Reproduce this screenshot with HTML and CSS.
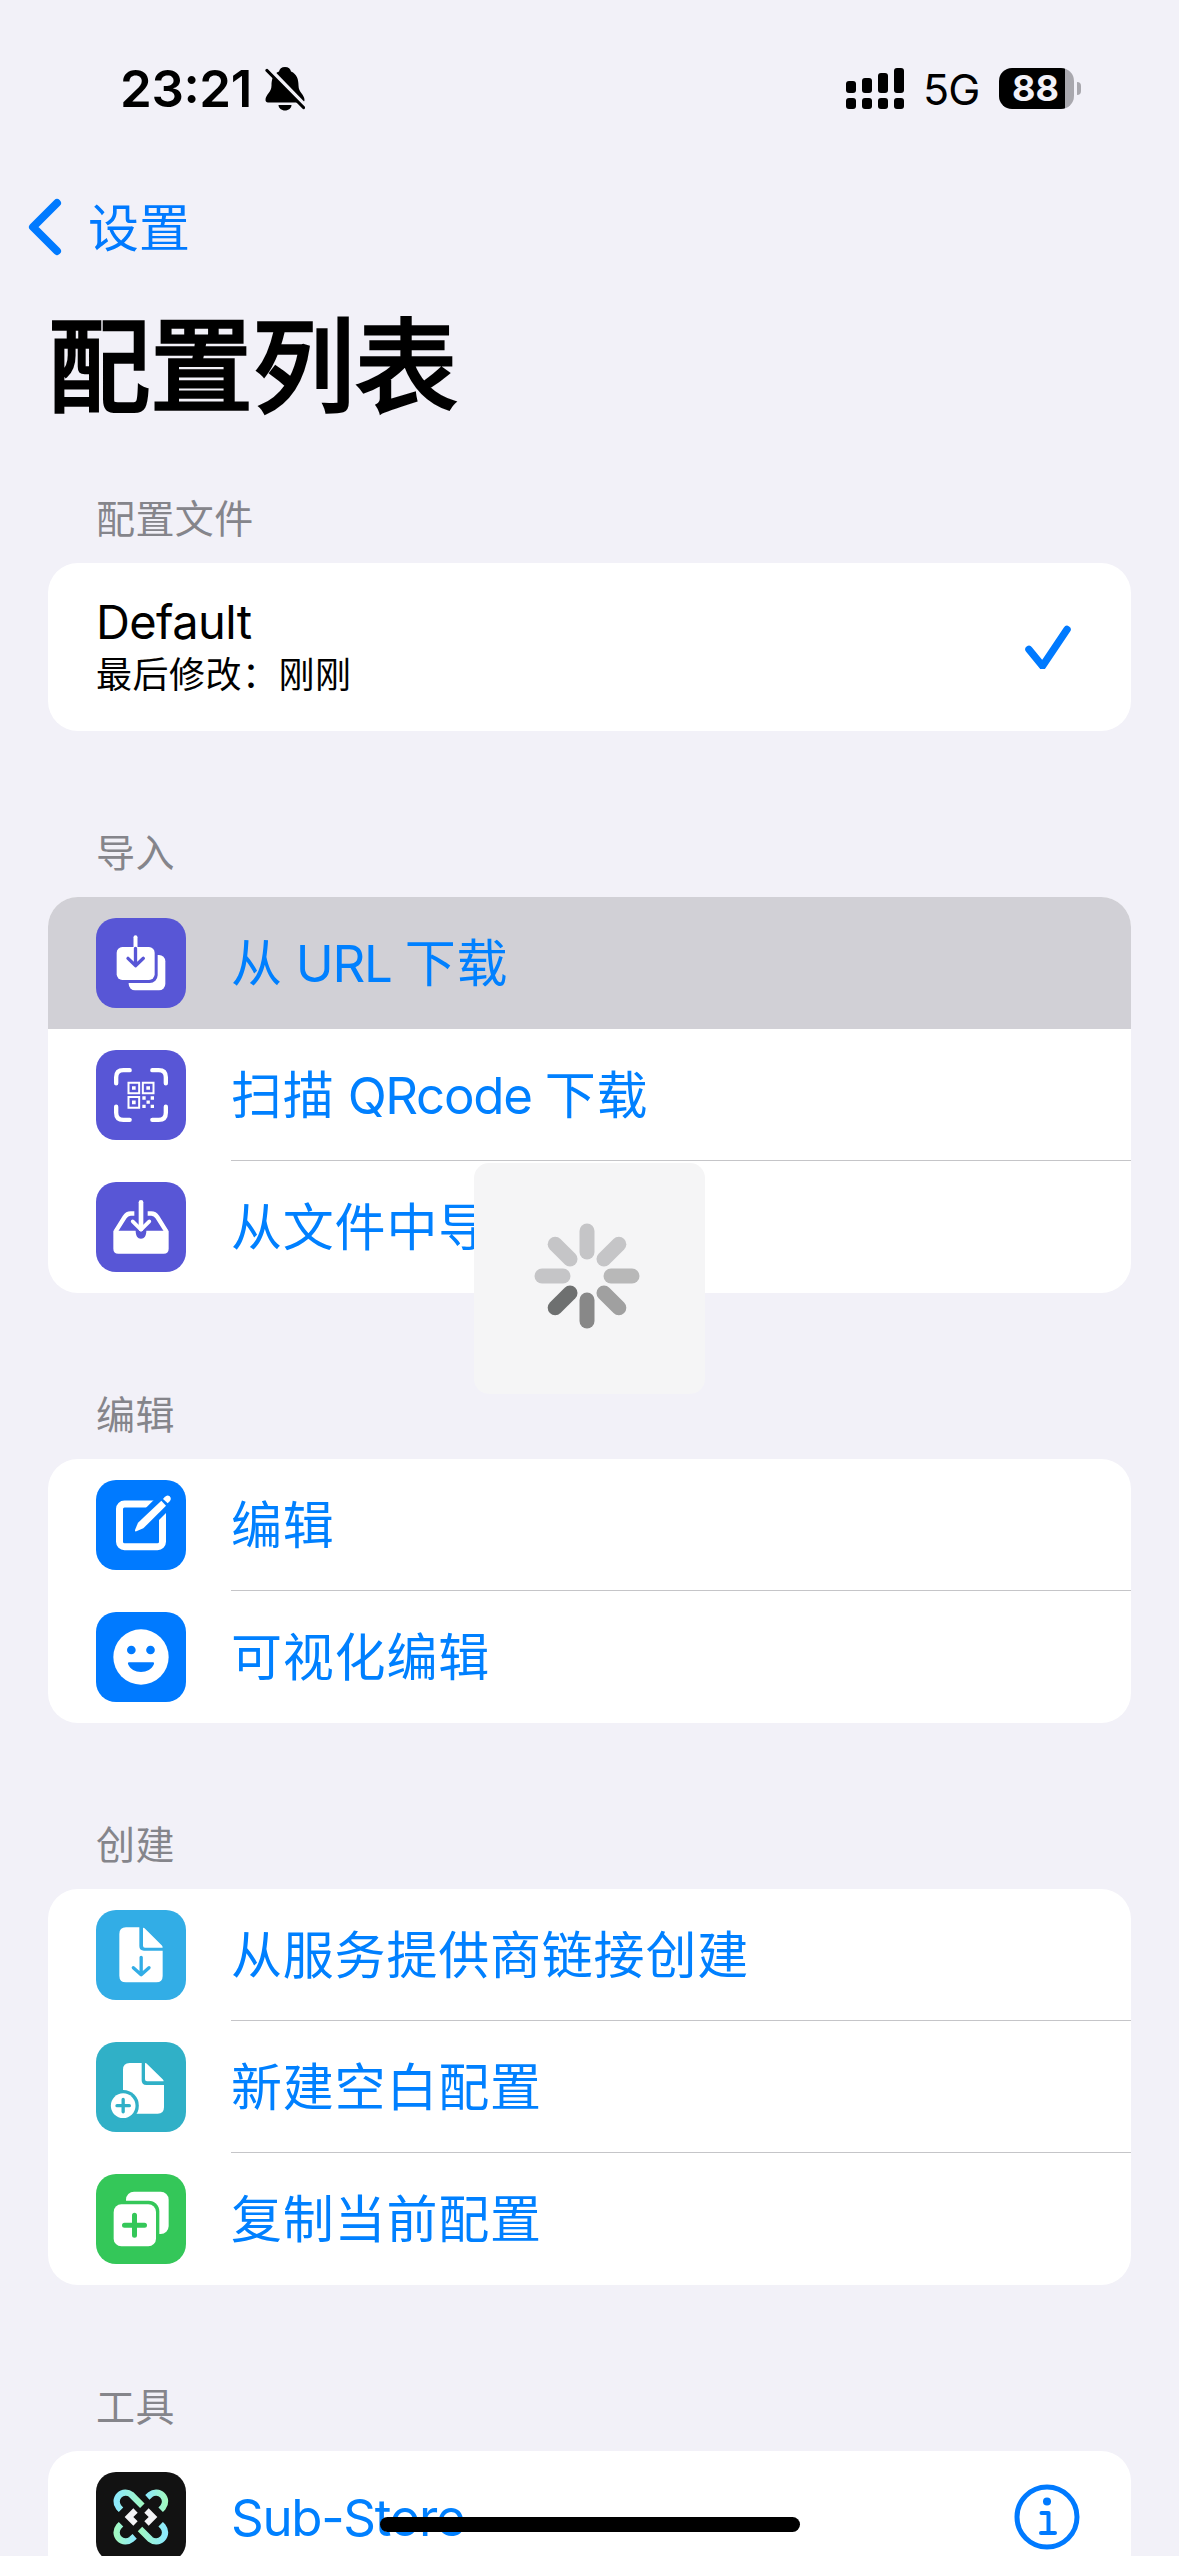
FILE: index.html
```html
<!DOCTYPE html>
<html lang="zh-CN">
<head>
  <meta charset="UTF-8">
  <meta name="viewport" content="width=device-width, initial-scale=1.0">
  <title>配置列表</title>
  <link rel="stylesheet" href="styles.css">
</head>
<body>
  <header class="status-bar">
    <div class="status-left">
      <span class="time">23<span class="colon">:</span>21</span>
      <svg class="bell" viewBox="0 0 40 44">
        <path d="M20 0c3.500 0 5.500 2 6 4.500 6 2.500 7.500 8 7.500 14 0 7 6 9 6 14.500 0 1.500-1 2.500-2.500 2.500H3C1.500 35.500.500 34.500.500 33c0-5.500 6-7.500 6-14.500 0-6 1.500-11.500 7.500-14C14.500 2 16.500 0 20 0z"/>
        <path d="M13.500 38h13c0 3-3 5.500-6.500 5.500s-6.500-2.500-6.500-5.500z"/>
        <path class="bell-gap" d="M3 1L40 39"/>
        <path class="bell-slash" d="M2 3.500L38.500 40.500"/>
      </svg>
    </div>
    <div class="status-right">
      <svg class="signal" viewBox="0 0 58 41">
        <rect x="0" y="13" width="10" height="12" rx="3"/>
        <rect x="16" y="10" width="10" height="15" rx="3"/>
        <rect x="32" y="5" width="10" height="20" rx="3"/>
        <rect x="48" y="0" width="10" height="25" rx="3"/>
        <rect x="0" y="30" width="10" height="11" rx="3"/>
        <rect x="16" y="30" width="10" height="11" rx="3"/>
        <rect x="32" y="30" width="10" height="11" rx="3"/>
        <rect x="48" y="30" width="10" height="11" rx="3"/>
      </svg>
      <span class="network">5G</span>
      <div class="battery"><span class="battery-level">88</span></div>
      <span class="battery-cap"></span>
    </div>
  </header>

  <nav class="nav">
    <svg class="back" viewBox="0 0 34 58"><path d="M29 5L5 29l24 24"/></svg>
    <span class="nav-title">设置</span>
  </nav>

  <h1>配置列表</h1>

  <main>
    <section>
      <h2>配置文件</h2>
      <div class="card">
        <div class="profile">
          <div>
            <p class="profile-name">Default</p>
            <p class="profile-date">最后修改：刚刚</p>
          </div>
          <svg class="check" viewBox="0 0 46 44"><path d="M4 24.500L17.500 41 42 4.500"/></svg>
        </div>
      </div>
    </section>

    <section>
      <h2>导入</h2>
      <div class="card">
        <div class="row pressed">
          <svg class="icon indigo" viewBox="0 0 270 270">
            <rect x="98" y="111" width="110" height="106" rx="19"/>
            <rect class="bg" x="53" y="78" width="132" height="117" rx="24"/>
            <rect x="62" y="87" width="114" height="99" rx="17"/>
            <path class="line" stroke-width="12" d="M118.500 58v34"/>
            <path class="line-bg" stroke-width="10" d="M118.500 91v50M96 121l22.500 22L142 121"/>
          </svg>
          <span class="label">从<span class="latin"> URL </span>下载</span>
        </div>
        <div class="row">
          <svg class="icon indigo" viewBox="0 0 270 270">
            <path class="line" stroke-width="13" d="M60.500 100V82q0-21.500 21.500-21.500h19M169 60.500h19q21.500 0 21.500 21.500v18M209.500 170v18q0 21.500-21.500 21.500h-19M101 209.500H82q-21.500 0-21.500-21.500v-18"/>
            <path class="thin" d="M97.500 98h32v32h-32zM140.500 98h32v32h-32zM97.500 141h32v32h-32z"/>
            <path d="M108 108.500h11v11h-11zM151 108.500h11v11h-11zM108 151.500h11v11h-11zM139 139h10v10h-10zM164 139h10v10h-10zM151.500 151.500h10v10h-10zM139 164h10v10h-10zM164 164h10v10h-10z"/>
          </svg>
          <span class="label">扫描<span class="latin"> QRcode </span>下载</span>
        </div>
        <div class="row">
          <svg class="icon indigo" viewBox="0 0 270 270">
            <path d="M52 146h67c0 15 6 24 16 24s16-9 16-24h67v54q0 15-15 15H67q-15 0-15-15z"/>
            <path class="line butt" stroke-width="13" d="M58.500 149L86 105q7-10.500 18-10.500h11M211.500 149L184 105q-7-10.500-18-10.500h-11"/>
            <path class="line" stroke-width="14" d="M135 61v80"/>
            <path class="line" stroke-width="11" d="M110 118l25 25 25-25"/>
          </svg>
          <span class="label">从文件中导入</span>
        </div>
      </div>
    </section>

    <section>
      <h2>编辑</h2>
      <div class="card">
        <div class="row">
          <svg class="icon blue" viewBox="0 0 270 270">
            <rect class="line" stroke-width="21" x="70.500" y="72" width="129" height="128.500" rx="15"/>
            <path class="line-bg butt" stroke-width="54" d="M142 129l90-90"/>
            <path d="M117 150l9-22 70-66 14 15-68 68-21 9q-5 1-4-4z"/>
            <path d="M201 57l5-6q8-8 15-2 7 8 0 15l-6 6z"/>
          </svg>
          <span class="label">编辑</span>
        </div>
        <div class="row">
          <svg class="icon blue" viewBox="0 0 270 270">
            <circle cx="135" cy="135" r="83"/>
            <circle class="bg" cx="106" cy="114" r="13"/>
            <circle class="bg" cx="163.500" cy="114" r="13"/>
            <path class="bg" d="M99 151h72q5 0 3 5c-6 16-22 24-39 24s-33-8-39-24q-2-5 3-5z"/>
          </svg>
          <span class="label">可视化编辑</span>
        </div>
      </div>
    </section>

    <section>
      <h2>创建</h2>
      <div class="card">
        <div class="row">
          <svg class="icon sky" viewBox="0 0 270 270">
            <path d="M90 52h40v56q0 14 14 14h56v76q0 19-19 19H90q-20 0-20-20V72q0-20 20-20z"/>
            <path d="M141 53q4 0 7 4l49 49q3 3 3 7h-53q-6 0-6-6z"/>
            <path class="line-bg" stroke-width="10" d="M135.500 142v51M112 173l23.500 21 23.500-21"/>
          </svg>
          <span class="label">从服务提供商链接创建</span>
        </div>
        <div class="row">
          <svg class="icon teal" viewBox="0 0 270 270">
            <path d="M101 63h36v52q0 14 14 14h53v67q0 19-19 19H81V83q0-20 20-20z"/>
            <path d="M147 63q4 0 7 4l46 45q3 3 3 6h-50q-6 0-6-6z"/>
            <circle class="bg" cx="81.500" cy="191" r="47"/>
            <circle cx="81.500" cy="191" r="37"/>
            <path class="line-bg" stroke-width="10" d="M63 191h37M81.500 172.500v37"/>
          </svg>
          <span class="label">新建空白配置</span>
        </div>
        <div class="row">
          <svg class="icon green" viewBox="0 0 270 270">
            <rect x="90" y="53" width="128" height="127" rx="24"/>
            <rect class="bg" x="43" y="80" width="147" height="147" rx="32"/>
            <rect x="53" y="91" width="127" height="126" rx="23"/>
            <path class="line-bg" stroke-width="15" d="M85.500 153.500h60M115.500 123.500v60"/>
          </svg>
          <span class="label">复制当前配置</span>
        </div>
      </div>
    </section>

    <section>
      <h2>工具</h2>
      <div class="card">
        <div class="row">
          <svg class="icon dark" viewBox="0 0 270 270">
            <defs>
              <linearGradient id="mint-right"><stop offset="0" stop-color="#8de9fb"/><stop offset="1" stop-color="#a0f8c2"/></linearGradient>
              <linearGradient id="mint-left"><stop offset="0" stop-color="#a0f8c2"/><stop offset="1" stop-color="#8de9fb"/></linearGradient>
            </defs>
            <path class="hook" stroke="url(#mint-right)" d="M75 113l-7-7a27 27 0 0 1 38-38l33 33"/>
            <path class="hook" stroke="url(#mint-right)" d="M154 76l9-8a27 27 0 0 1 38 38l-7 7"/>
            <path class="hook" stroke="url(#mint-left)" d="M132 171l31 31a27 27 0 0 0 38-38l-7-7"/>
            <path class="hook" stroke="url(#mint-left)" d="M75 157l-7 7a27 27 0 0 0 38 38l10-9"/>
            <path class="arrows" d="M112 109l13 13-13 13 13 13-13 13-26-26zM158 109l26 26-26 26-13-13 13-13-13-13z"/>
          </svg>
          <span class="label"><span class="latin">Sub-Store</span></span>
          <svg class="info" viewBox="0 0 66 66">
            <circle class="ring" cx="33" cy="33" r="30"/>
            <circle cx="33" cy="17.500" r="4"/>
            <path d="M27.500 29H34.500V49M27 49h14"/>
          </svg>
        </div>
      </div>
    </section>
  </main>

  <div class="hud">
    <svg class="spinner" viewBox="-53 -53 106 106">
      <path stroke="#c5c5c7" d="M0-45v21"/>
      <path stroke="#c5c5c7" d="M0-45v21" transform="rotate(45)"/>
      <path stroke="#b8b8b8" d="M0-45v21" transform="rotate(90)"/>
      <path stroke="#a0a0a0" d="M0-45v21" transform="rotate(135)"/>
      <path stroke="#888888" d="M0-45v21" transform="rotate(180)"/>
      <path stroke="#6e7070" d="M0-45v21" transform="rotate(225)"/>
      <path stroke="#c5c5c7" d="M0-45v21" transform="rotate(270)"/>
      <path stroke="#c5c5c7" d="M0-45v21" transform="rotate(315)"/>
    </svg>
  </div>
  <div class="home-indicator"></div>
</body>
</html>
```
FILE: styles.css
```css
* {
  box-sizing: border-box;
}
body {
  margin: 0;
  height: 2556px;
  overflow: hidden;
  position: relative;
  background: #f2f1f8;
  color: #000;
  font-family: Inter, "Noto Sans CJK SC", sans-serif;
}
h1, h2, p {
  margin: 0;
}
svg {
  display: block;
  flex: none;
}

/* status bar */
.status-bar {
  height: 177px;
  padding: 0 98px 0 120px;
  display: flex;
  align-items: center;
  justify-content: space-between;
}
.status-left, .status-right {
  display: flex;
  align-items: center;
}
.time {
  width: 145px;
  font-size: 51px;
  font-weight: 600;
  line-height: 60px;
  letter-spacing: -0.4px;
  white-space: nowrap;
}
.colon {
  position: relative;
  top: -4px;
}
.bell {
  width: 40px;
  height: 44px;
}
.bell-gap {
  stroke: #f2f1f8;
  stroke-width: 5;
}
.bell-slash {
  stroke: #000;
  stroke-width: 3.2;
  stroke-linecap: round;
}
.signal {
  width: 58px;
  height: 41px;
}
.network {
  width: 76px;
  margin-left: 19px;
  font-size: 43px;
  line-height: 50px;
  letter-spacing: -1px;
}
.battery {
  width: 75px;
  height: 41px;
  border-radius: 13px;
  background: linear-gradient(90deg, #000 66px, #a9a8ae 66px);
  color: #f2f1f8;
}
.battery-level {
  display: block;
  padding-left: 13px;
  font-size: 36px;
  font-weight: 700;
  line-height: 41px;
}
.battery-cap {
  width: 4px;
  height: 13px;
  margin-left: 3px;
  border-radius: 0 4px 4px 0;
  background: #a9a8ae;
}

/* navigation */
.nav {
  height: 100px;
  padding-left: 28px;
  display: flex;
  align-items: center;
  gap: 26px;
  color: #007aff;
  font-size: 51px;
}
.nav-title {
  padding-bottom: 5px;
}
.back {
  width: 34px;
  height: 58px;
}
.back path, .check path {
  fill: none;
  stroke: #007aff;
  stroke-width: 8;
  stroke-linecap: round;
  stroke-linejoin: round;
}
h1 {
  padding: 39px 48px 0;
  font-size: 102px;
  font-weight: 400;
  line-height: 102px;
  letter-spacing: 0.4px;
  -webkit-text-stroke: 3.6px #000;
}

/* grouped list */
main {
  padding: 77px 48px 0;
}
section {
  margin-bottom: 98px;
}
h2 {
  padding: 0 48px 20px;
  color: #85858b;
  font-size: 39px;
  font-weight: 400;
  line-height: 48px;
  letter-spacing: 0.4px;
}
.card {
  overflow: hidden;
  border-radius: 30px;
  background: #fff;
}
.profile {
  height: 168px;
  padding: 0 60px 0 48px;
  display: flex;
  align-items: center;
  justify-content: space-between;
}
.profile-name {
  font-size: 47px;
  line-height: 58px;
  letter-spacing: -0.6px;
}
.profile-date {
  padding-bottom: 2px;
  font-size: 36px;
  line-height: 48px;
  letter-spacing: 0.5px;
}
.check {
  width: 46px;
  height: 44px;
}
.check path {
  stroke-width: 7.5;
}
.row {
  height: 132px;
  padding-left: 48px;
  display: flex;
  align-items: center;
  gap: 45px;
}
.label {
  flex: 1;
  height: 132px;
  padding-top: 2px;
  color: #0080ff;
  font-size: 51px;
  line-height: 130px;
  letter-spacing: 0.8px;
}
.latin {
  letter-spacing: -1.3px;
}
.row:not(:last-child):not(.pressed) .label {
  border-bottom: 1px solid #c5c5c8;
}
.pressed {
  background: #d1d0d6;
}

/* row icons */
.icon {
  width: 90px;
  height: 90px;
  border-radius: 20px;
  background: var(--tint);
  fill: #fff;
}
.icon .bg {
  fill: var(--tint);
}
.icon .line, .icon .line-bg {
  fill: none;
  stroke: #fff;
  stroke-linecap: round;
  stroke-linejoin: round;
}
.icon .line-bg {
  stroke: var(--tint);
}
.icon .butt {
  stroke-linecap: butt;
}
.icon .thin {
  fill: none;
  stroke: #fff;
  stroke-width: 6;
}
.hook {
  fill: none;
  stroke-width: 19;
}
.arrows {
  fill: #f4f4f6;
}
.indigo { --tint: #5856d6; }
.blue { --tint: #007aff; }
.sky { --tint: #32ade6; }
.teal { --tint: #30b0c7; }
.green { --tint: #34c759; }
.dark { --tint: #121212; }
.info {
  width: 66px;
  height: 66px;
  margin-right: 51px;
  fill: #007aff;
}
.info .ring, .info path {
  fill: none;
  stroke: #007aff;
  stroke-width: 5;
}
.info path {
  stroke-width: 4;
  stroke-linecap: round;
  stroke-linejoin: round;
}

/* overlays */
.hud {
  position: absolute;
  left: 474px;
  top: 1163px;
  width: 231px;
  height: 231px;
  padding: 59.5px 0 0 59.5px;
  border-radius: 15px;
  background: #f5f5f6;
}
.spinner {
  width: 106px;
  height: 106px;
  stroke-width: 15;
  stroke-linecap: round;
}
.home-indicator {
  position: absolute;
  left: 380px;
  top: 2517px;
  width: 420px;
  height: 15px;
  border-radius: 8px;
  background: #000;
}
```
